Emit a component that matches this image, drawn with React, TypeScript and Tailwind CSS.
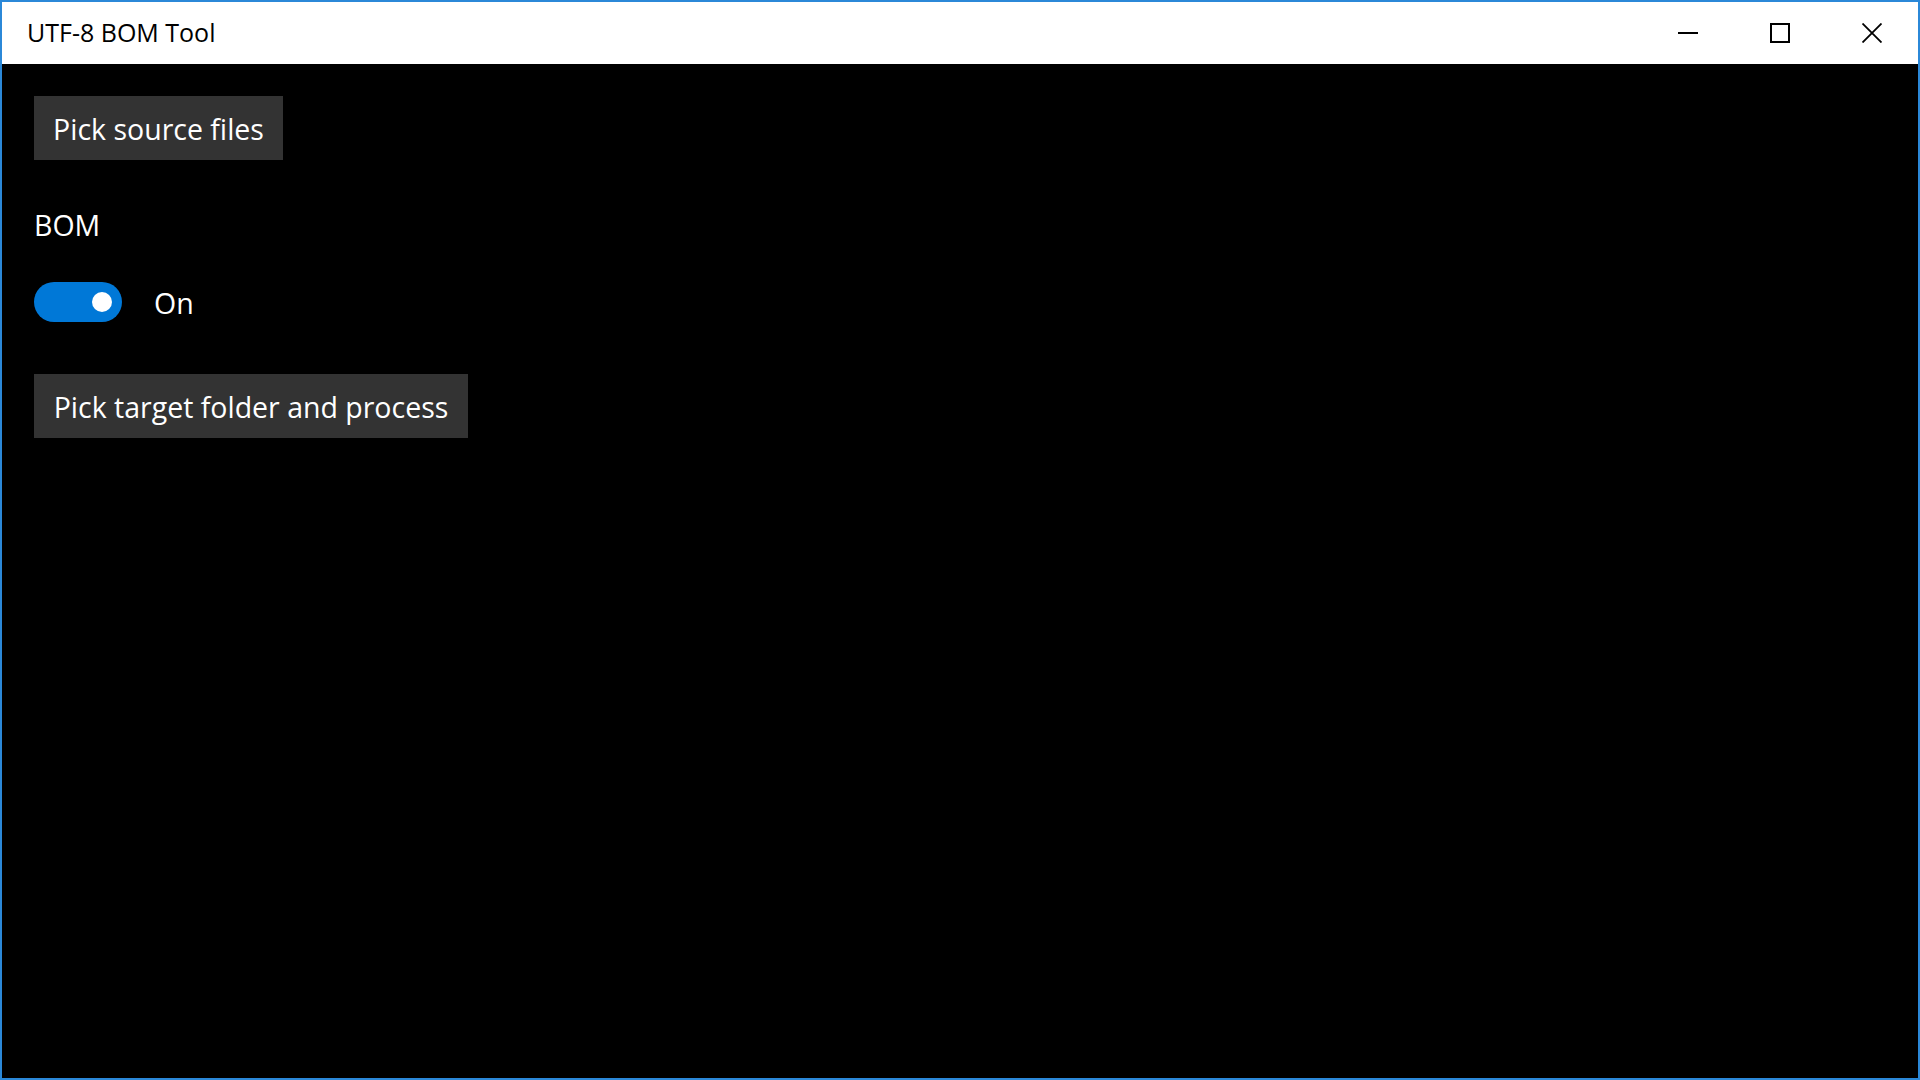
export default function App() {
  const font = { fontFamily: '"Open Sans", "Noto Sans", sans-serif' };
  return (
    <div
      className="w-[1920px] h-[1080px] border-2 border-[#2b88d8] bg-black flex flex-col overflow-hidden"
      style={font}
    >
      <div className="h-[62px] bg-white flex items-center shrink-0">
        <span className="ml-[25px] -mt-[1px] text-[25px] leading-none text-black">UTF-8 BOM Tool</span>
        <div className="ml-auto flex h-full">
          <div className="w-[92px] h-full flex items-center justify-center">
            <svg width="20" height="20" viewBox="0 0 20 20">
              <rect x="0" y="9" width="20" height="2" fill="#000" />
            </svg>
          </div>
          <div className="w-[92px] h-full flex items-center justify-center">
            <svg width="20" height="20" viewBox="0 0 20 20">
              <rect x="1" y="1" width="18" height="18" fill="none" stroke="#000" strokeWidth="2" />
            </svg>
          </div>
          <div className="w-[92px] h-full flex items-center justify-center">
            <svg width="20" height="20" viewBox="0 0 20 20">
              <path d="M0.5 0.5 L19.5 19.5 M19.5 0.5 L0.5 19.5" stroke="#000" strokeWidth="1.8" />
            </svg>
          </div>
        </div>
      </div>
      <div className="flex-1 pt-8 pl-8 flex flex-col items-start">
        <div className="w-[249px] h-16 pt-[2px] bg-[#333333] flex items-center justify-center text-white text-[28.5px] leading-none">
          Pick source files
        </div>
        <div className="mt-[51px] text-white text-[28.5px] leading-[28px]">BOM</div>
        <div className="mt-[43px] h-10 flex items-center">
          <div className="w-[88px] h-10 rounded-full bg-[#0078d7] flex items-center justify-end pr-[10px]">
            <div className="w-5 h-5 rounded-full bg-white" />
          </div>
          <span className="ml-[32px] pt-[3px] text-white text-[28.5px] leading-none">On</span>
        </div>
        <div className="mt-[52px] w-[434px] h-16 pt-[2px] bg-[#333333] flex items-center justify-center text-white text-[28.5px] leading-none">
          Pick target folder and process
        </div>
      </div>
    </div>
  );
}
